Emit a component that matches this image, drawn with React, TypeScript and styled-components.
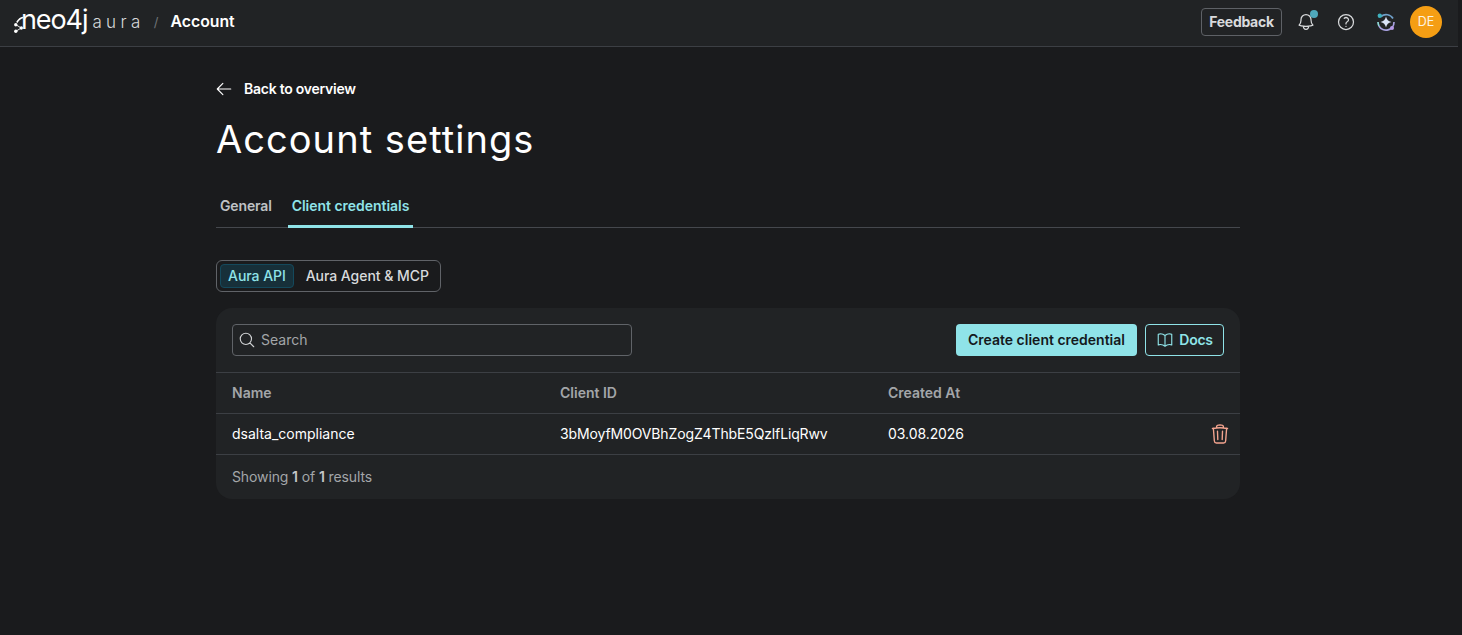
import React from "react";
import styled, { createGlobalStyle } from "styled-components";
import {
  HiOutlineArrowLeft,
  HiOutlineBell,
  HiOutlineQuestionMarkCircle,
  HiOutlineMagnifyingGlass,
  HiOutlineBookOpen,
  HiOutlineTrash,
} from "react-icons/hi2";

const Global = createGlobalStyle`
  html, body { margin: 0; padding: 0; height: 100%; background: #1a1b1d; overflow: hidden; }
  #root { height: 100%; }
  * { box-sizing: border-box; }
  body { font-family: Inter, "Liberation Sans", sans-serif; color: #fff; }
`;

const Shell = styled.div`
  height: 635px;
  display: flex;
  flex-direction: column;
  padding-right: 4px;
`;

const TopBar = styled.header`
  height: 47px;
  flex: none;
  background: #212325;
  border-bottom: 1px solid #3c3f44;
  display: flex;
  align-items: center;
  padding: 0 16px 2px 14px;
`;

const LogoLink = styled.div`
  display: flex;
  align-items: center;
`;

const LogoWord = styled.span`
  font-family: Inter, sans-serif;
  font-size: 27px;
  font-weight: 400;
  line-height: 30px;
  letter-spacing: -1.1px;
  margin-left: -7px;
  margin-top: -4px;
`;

const LogoSub = styled.span`
  font-family: Inter, sans-serif;
  font-size: 17px;
  font-weight: 300;
  letter-spacing: 4.4px;
  color: #d6d8da;
  margin-left: 5px;
  margin-top: -1px;
`;

const Slash = styled.span`
  color: #6f7378;
  font-size: 13px;
  margin-left: 9px;
  margin-right: 12px;
  margin-top: -1px;
`;

const Crumb = styled.span`
  font-size: 15.8px;
  font-weight: 600;
  color: #fff;
  margin-top: -2px;
`;

const TopActions = styled.div`
  margin-left: auto;
  display: flex;
  align-items: center;
`;

const FeedbackButton = styled.button`
  height: 28px;
  width: 81px;
  padding: 0 0 2px;
  background: transparent;
  border: 1px solid #5e6166;
  border-radius: 4px;
  color: #d8dadc;
  font: 700 14px Inter, sans-serif;
  letter-spacing: -0.28px;
`;

const IconSlot = styled.span<{ $gap: number }>`
  position: relative;
  width: 20px;
  height: 20px;
  margin-left: ${(p) => p.$gap}px;
  display: inline-flex;
  align-items: center;
  justify-content: center;
  color: #d8dadc;
`;

const Dot = styled.span`
  position: absolute;
  top: -2px;
  right: -2px;
  width: 8px;
  height: 8px;
  border-radius: 50%;
  background: #4fa9bd;
`;

const Avatar = styled.div`
  width: 32px;
  height: 32px;
  margin-left: 14px;
  border-radius: 50%;
  background: #f59e14;
  color: #fdf3e0;
  display: flex;
  align-items: center;
  justify-content: center;
  font-size: 12.5px;
  padding-bottom: 1px;
`;

const Main = styled.main`
  width: 1024px;
  margin-left: 216px;
  display: flex;
  flex-direction: column;
`;

const BackLink = styled.div`
  margin-top: 33px;
  margin-left: -1px;
  height: 18px;
  display: flex;
  align-items: center;
  gap: 11px;
  font-size: 14px;
  font-weight: 600;
  letter-spacing: -0.25px;
  color: #fff;
  span { margin-top: -2px; }
`;

const Title = styled.h1`
  margin: 19px 0 0;
  font-family: Inter, sans-serif;
  font-size: 38px;
  line-height: 44px;
  font-weight: 400;
  letter-spacing: 1.05px;
  color: #fff;
`;

const Tabs = styled.div`
  margin-top: 31px;
  height: 36px;
  display: flex;
  border-bottom: 1px solid #45484d;
`;

const Tab = styled.div<{ $active?: boolean }>`
  padding: 0 4px;
  margin-right: ${(p) => (p.$active ? 0 : "12px")};
  height: 36px;
  line-height: 27px;
  font-size: 14px;
  font-weight: 600;
  letter-spacing: ${(p) => (p.$active ? "-0.03px" : "-0.15px")};
  color: ${(p) => (p.$active ? "#8fe3e8" : "#bfc2c5")};
  border-bottom: ${(p) => (p.$active ? "3px solid #8fe3e8" : "none")};
  border-radius: 2px 2px 0 0;
`;

const Segmented = styled.div`
  margin-top: 32px;
  align-self: flex-start;
  height: 32px;
  padding: 3px;
  display: flex;
  align-items: stretch;
  gap: 4px;
  border: 1px solid #606368;
  border-radius: 6px;
`;

const Segment = styled.div<{ $active?: boolean }>`
  padding: 0 7px 2px;
  display: flex;
  align-items: center;
  font-size: 14px;
  font-weight: 500;
  letter-spacing: -0.05px;
  color: ${(p) => (p.$active ? "#8fe3e8" : "#d8dadc")};
  background: ${(p) => (p.$active ? "#17303a" : "transparent")};
  border: 1px solid ${(p) => (p.$active ? "#14495c" : "transparent")};
  border-radius: 4px;
`;

const Card = styled.section`
  margin-top: 16px;
  background: #212325;
  border-radius: 16px;
  display: flex;
  flex-direction: column;
`;

const CardToolbar = styled.div`
  height: 64px;
  padding: 0 16px;
  display: flex;
  align-items: center;
`;

const SearchBox = styled.div`
  width: 400px;
  height: 32px;
  padding: 0 5px;
  display: flex;
  align-items: center;
  gap: 5px;
  border: 1px solid #606368;
  border-radius: 4px;
  color: #d0d2d4;
`;

const Placeholder = styled.span`
  font-size: 14px;
  color: #a3a6a9;
  margin-top: -2px;
`;

const PrimaryButton = styled.button`
  margin-left: auto;
  width: 181px;
  height: 32px;
  padding: 0 0 2px;
  background: #8fe3e8;
  border: none;
  border-radius: 4px;
  color: #14191c;
  font: 600 14px Inter, sans-serif;
`;

const OutlineButton = styled.button`
  margin-left: 8px;
  width: 79px;
  height: 32px;
  padding: 0;
  display: flex;
  align-items: center;
  justify-content: center;
  gap: 5px;
  background: transparent;
  border: 1px solid #8fe3e8;
  border-radius: 4px;
  color: #8fe3e8;
  font: 600 14px Inter, sans-serif;
  letter-spacing: -0.3px;
  span { margin-top: -2px; }
`;

const Row = styled.div<{ $head?: boolean }>`
  height: 41px;
  padding: 0 8px 2px 16px;
  display: grid;
  grid-template-columns: 328px 328px 1fr 24px;
  align-items: center;
  border-top: 1px solid #3c3f44;
  font-size: 14px;
  font-weight: ${(p) => (p.$head ? 600 : 400)};
  color: ${(p) => (p.$head ? "#a3a6a9" : "#fff")};
`;

const Cell = styled.span<{ $tracking?: number }>`
  letter-spacing: ${(p) => p.$tracking ?? 0}px;
`;

const DeleteIcon = styled.span`
  display: flex;
  justify-content: center;
  color: #f4a48f;
  padding-top: 2px;
`;

const CardFooter = styled.div`
  height: 45px;
  padding: 0 16px 2px;
  display: flex;
  align-items: center;
  border-top: 1px solid #3c3f44;
  font-size: 14px;
  letter-spacing: -0.12px;
  color: #a3a6a9;
  b { font-weight: 600; color: #c4c6c8; }
`;

const NeoMark = () => (
  <svg width="14" height="24" viewBox="0 0 14 24" fill="#fff">
    <circle cx="1.800" cy="14.700" r="1.700" />
    <circle cx="1.800" cy="21.300" r="1.700" />
    <circle cx="7.300" cy="18" r="1.700" />
    <path d="M1.800 14.700 7.300 18 1.800 21.300" stroke="#fff" strokeWidth="0.900" fill="none" />
    <path d="M2.800 12.500C4 10.500 5.500 8 9 7.500" stroke="#fff" strokeWidth="1.600" fill="none" />
  </svg>
);

const AssistantIcon = () => (
  <svg width="20" height="20" viewBox="0 0 20 20" fill="none">
    <path d="M5 4.500A8 8 0 0 1 17 6.500" stroke="#6f9fc8" strokeWidth="1.700" />
    <path d="M18 10A8 8 0 0 1 3 14" stroke="#a7a0de" strokeWidth="1.700" />
    <path d="M2 10a8 8 0 0 0 1 4" stroke="#8fd7d8" strokeWidth="1.700" />
    <path d="M10 4.500c.7 3.200 2.300 4.800 5.500 5.500-3.200.7-4.800 2.300-5.500 5.500-.7-3.200-2.300-4.800-5.500-5.500 3.200-.7 4.800-2.300 5.500-5.500Z" fill="#dbe4f7" />
    <circle cx="3.800" cy="3.800" r="2.200" fill="#3fb0bd" />
    <circle cx="16" cy="16" r="2" fill="#b79be8" />
  </svg>
);

export default function App() {
  return (
    <Shell>
      <Global />
      <TopBar>
        <LogoLink>
          <NeoMark />
          <LogoWord>neo4j</LogoWord>
          <LogoSub>aura</LogoSub>
        </LogoLink>
        <Slash>/</Slash>
        <Crumb>Account</Crumb>
        <TopActions>
          <FeedbackButton>Feedback</FeedbackButton>
          <IconSlot $gap={14}>
            <HiOutlineBell size={20} />
            <Dot />
          </IconSlot>
          <IconSlot $gap={20}>
            <HiOutlineQuestionMarkCircle size={20} />
          </IconSlot>
          <IconSlot $gap={20}>
            <AssistantIcon />
          </IconSlot>
          <Avatar>DE</Avatar>
        </TopActions>
      </TopBar>
      <Main>
        <BackLink>
          <HiOutlineArrowLeft size={18} />
          <span>Back to overview</span>
        </BackLink>
        <Title>Account settings</Title>
        <Tabs>
          <Tab>General</Tab>
          <Tab $active>Client credentials</Tab>
        </Tabs>
        <Segmented>
          <Segment $active>Aura API</Segment>
          <Segment>Aura Agent &amp; MCP</Segment>
        </Segmented>
        <Card>
          <CardToolbar>
            <SearchBox>
              <HiOutlineMagnifyingGlass size={18} />
              <Placeholder>Search</Placeholder>
            </SearchBox>
            <PrimaryButton>Create client credential</PrimaryButton>
            <OutlineButton>
              <HiOutlineBookOpen size={18} />
              <span>Docs</span>
            </OutlineButton>
          </CardToolbar>
          <Row $head>
            <Cell>Name</Cell>
            <Cell>Client ID</Cell>
            <Cell>Created At</Cell>
            <Cell />
          </Row>
          <Row>
            <Cell>dsalta_compliance</Cell>
            <Cell $tracking={-0.13}>3bMoyfM0OVBhZogZ4ThbE5QzlfLiqRwv</Cell>
            <Cell $tracking={-0.07}>03.08.2026</Cell>
            <DeleteIcon>
              <HiOutlineTrash size={22} />
            </DeleteIcon>
          </Row>
          <CardFooter>
            <span>
              Showing <b>1</b> of <b>1</b> results
            </span>
          </CardFooter>
        </Card>
      </Main>
    </Shell>
  );
}
